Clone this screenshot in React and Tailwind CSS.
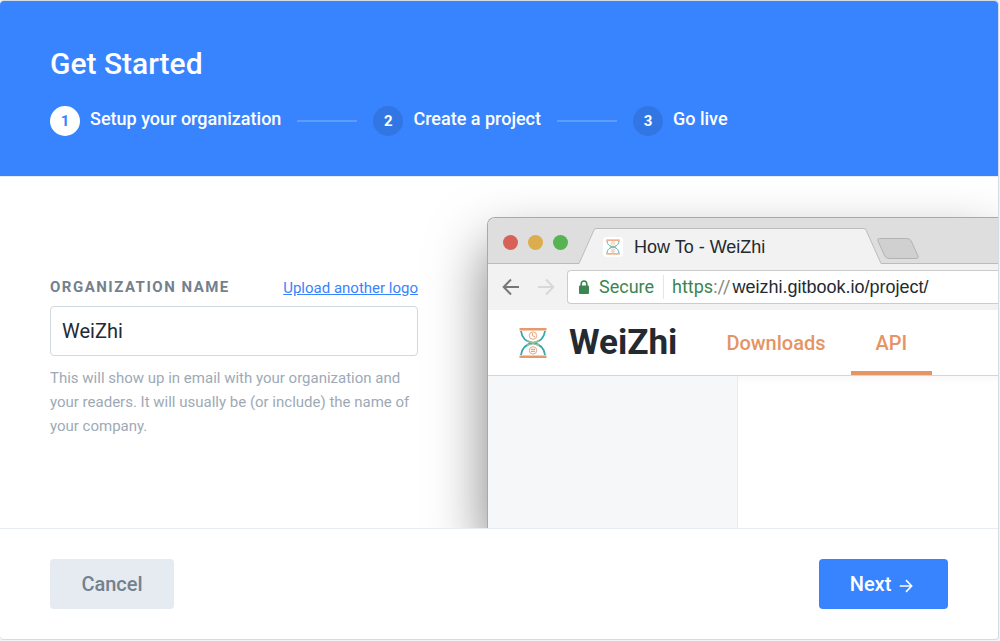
import React from "react";

const steps = ["Setup your organization", "Create a project", "Go live"];

function Hourglass({ className }) {
  return (
    <svg className={className} viewBox="0 0 30 32" fill="none" aria-hidden="true">
      <path d="M3 4C4 12 9 15 15 16C21 15 26 12 27 4" stroke="#36a7ae" strokeWidth="1.8" />
      <path d="M3 28C4 20 9 17 15 16C21 17 26 20 27 28" stroke="#36a7ae" strokeWidth="1.8" />
      <path d="M9 13.6Q12 15.3 15 16Q18 15.3 21 13.6M9 18.4Q12 16.7 15 16Q18 16.7 21 18.4" stroke="#8fbfa0" strokeWidth="1.8" />
      <path d="M1.5 2.2H28.5M1.5 29.8H28.5" stroke="#e8996b" strokeWidth="2.6" />
      <circle cx="15" cy="8.6" r="3.7" stroke="#e8a47c" strokeWidth="1" />
      <path d="M14.5 6.2V8.8L17 9.8" stroke="#e8a47c" strokeWidth="1" />
      <circle cx="15" cy="23.4" r="3.7" stroke="#e8a47c" strokeWidth="1" />
      <path d="M13 22.4H17M13 24.4H17" stroke="#e8a47c" strokeWidth="1.1" />
    </svg>
  );
}

function Arrow({ className, left }) {
  return (
    <svg className={className} viewBox="0 0 18 18" fill="none" stroke="currentColor" strokeWidth="2" aria-hidden="true">
      {left ? <path d="M17 9H2M9 1.5L1.7 9L9 16.5" /> : <path d="M1 9H16M9 1.5L16.3 9L9 16.5" />}
    </svg>
  );
}

function Header() {
  return (
    <header className="rounded-t bg-[#3884ff] px-[50px] pt-[43px] pb-10 text-white">
      <h1 className="text-[30px] leading-10 font-medium">Get Started</h1>
      <ol className="mt-[22px] flex items-center">
        {steps.map((step, i) => (
          <li key={step} className="flex items-center">
            {i > 0 && <span className="mx-4 h-0.5 w-[60px] bg-white/20" />}
            <span
              className={
                i === 0
                  ? "flex size-[30px] items-center justify-center rounded-full bg-white text-[15px] font-bold text-[#3884ff]"
                  : "flex size-[30px] items-center justify-center rounded-full bg-[#3276e4] text-[15px] font-bold"
              }
            >
              {i + 1}
            </span>
            <span className="ml-2.5 pb-1 text-[18px] leading-[26px] font-medium">{step}</span>
          </li>
        ))}
      </ol>
    </header>
  );
}

function OrganizationForm() {
  return (
    <div className="w-[368px] shrink-0 pt-[97px]">
      <div className="flex items-center justify-between">
        <label htmlFor="organization" className="text-[15px] leading-6 font-bold tracking-[1.5px] text-[#74818d] uppercase">
          Organization name
        </label>
        <a href="#logo" className="pt-0.5 text-[15px] leading-6 text-[#3884ff] underline">
          Upload another logo
        </a>
      </div>
      <input
        id="organization"
        type="text"
        defaultValue="WeiZhi"
        className="mt-1.5 block h-[50px] w-full rounded border border-[#d0d9e2] bg-white px-[11px] text-[20px] text-[#242a31] outline-none"
      />
      <p className="mt-2.5 text-[15px] leading-6 text-[#9daab6]">
        This will show up in email with your organization and your readers. It will usually be (or include) the name of your company.
      </p>
    </div>
  );
}

function TabStrip() {
  return (
    <div className="flex h-[46px] items-end rounded-tl-[7px] bg-[#dedede]">
      <div className="flex h-[46px] w-[91px] shrink-0 items-center gap-[10px] border-b border-[#bcbcbc] pt-[3px] pl-[15px]">
        <span className="size-[15px] rounded-full bg-[#d96057]" />
        <span className="size-[15px] rounded-full bg-[#dbad4c]" />
        <span className="size-[15px] rounded-full bg-[#58b353]" />
      </div>
      <svg className="h-[36px] w-[17px] shrink-0" viewBox="0 0 17 36" fill="none" aria-hidden="true">
        <path d="M0 35.5L15 2Q15.7 .5 17 .5V36H0Z" fill="#f2f2f2" />
        <path d="M0 35.5L15 2Q15.7 .5 17 .5" stroke="#bcbcbc" />
      </svg>
      <div className="flex h-[36px] w-[268px] shrink-0 items-center gap-[11px] border-t border-[#bcbcbc] bg-[#f2f2f2] pl-[7px]">
        <span className="flex size-5 items-center justify-center rounded bg-white">
          <Hourglass className="size-4" />
        </span>
        <span className="text-[18px] leading-6 text-[#242a31] [font-family:'Liberation_Sans',Arial,sans-serif]">How To - WeiZhi</span>
      </div>
      <svg className="h-[36px] w-[17px] shrink-0" viewBox="0 0 17 36" fill="none" aria-hidden="true">
        <path d="M17 35.5L2 2Q1.3 .5 0 .5V36H17Z" fill="#f2f2f2" />
        <path d="M17 35.5L2 2Q1.3 .5 0 .5" stroke="#bcbcbc" />
      </svg>
      <div className="flex h-[46px] min-w-0 flex-1 items-center border-b border-[#bcbcbc] pt-4">
        <svg className="-ml-1 h-[21px] w-[42px] shrink-0" viewBox="0 0 42 21" fill="#d0d0d0" stroke="#b3b3b3" aria-hidden="true">
          <path d="M2.5 .5H30Q33 .5 34.2 3L41 18Q42 20.5 39.5 20.5H12Q9 20.5 7.8 18L1 3Q0 .5 2.5 .5Z" />
        </svg>
      </div>
    </div>
  );
}

function AddressBar() {
  return (
    <div className="flex h-[46px] items-center bg-[#f2f2f2] pl-3.5">
      <Arrow left className="size-[18px] shrink-0 text-[#777774]" />
      <Arrow className="ml-[17px] size-[18px] shrink-0 text-[#d8d8d8]" />
      <div className="ml-3 flex h-[34px] min-w-0 flex-1 items-center rounded-l border border-r-0 border-[#cccccc] bg-white pl-2.5 text-[18px] leading-6">
        <svg className="h-[15px] w-3 shrink-0" viewBox="0 0 12 15" fill="none" aria-hidden="true">
          <rect x="1" y="5.5" width="10" height="8.5" rx="1" fill="#3b8550" />
          <path d="M3.2 7V4A2.8 3 0 0 1 8.8 4V7" stroke="#3b8550" strokeWidth="1.6" />
        </svg>
        <span className="ml-[9px] text-[#3b8550]">Secure</span>
        <span className="mr-2 ml-[9px] h-6 w-px bg-[#e6e6e6]" />
        <span className="text-[#3b8550]">
          https<span className="text-[#85857b]">://</span>
        </span>
        <span className="ml-0.5 text-[#242a31] [font-family:'Liberation_Sans',Arial,sans-serif]">weizhi.gitbook.io/project/</span>
      </div>
    </div>
  );
}

function BrowserPreview() {
  return (
    <section
      aria-label="Preview"
      className="mt-10 flex min-w-0 flex-1 flex-col rounded-tl-lg border-t border-l border-[#a9a9a9] bg-white shadow-[0_28px_56px_rgba(0,0,0,0.5)]"
    >
      <TabStrip />
      <AddressBar />
      <div className="flex h-[66px] shrink-0 items-center border-b border-[#d3d6dc] pl-[30px]">
        <Hourglass className="h-8 w-[30px] shrink-0" />
        <span className="ml-[21px] text-[35px] leading-10 font-bold text-[#242a31]">WeiZhi</span>
        <nav className="ml-6 flex self-stretch text-[20px] font-medium text-[#e59464]">
          <a href="#downloads" className="flex items-center px-[25px]">Downloads</a>
          <a href="#api" className="flex items-center border-b-4 border-[#e59464] px-[25px] pt-1">API</a>
        </nav>
      </div>
      <div className="flex flex-1">
        <div className="w-[250px] border-r border-[#e6ecf1] bg-[#f5f7f9]" />
        <div className="h-2 flex-1 bg-linear-to-b from-[#f9f9f9] to-white" />
      </div>
    </section>
  );
}

export default function App() {
  return (
    <div className="min-h-screen bg-[#f2f5f8] pr-px pb-px [font-family:Roboto,sans-serif]">
      <main className="rounded border-t border-r border-b border-[#d3dce4] bg-white">
        <Header />
        <div className="flex min-h-[352px] gap-[69px] overflow-hidden border-t border-[#e6ecf1] pl-[50px]">
          <OrganizationForm />
          <BrowserPreview />
        </div>
        <footer className="flex items-center justify-between border-t border-[#e6ecf1] px-[50px] py-[30px]">
          <button type="button" className="h-[50px] w-[124px] rounded bg-[#e6ebf2] text-[20px] font-medium text-[#74818d]">
            Cancel
          </button>
          <button type="button" className="flex h-[50px] w-[129px] items-center justify-center gap-2 rounded bg-[#3884ff] pr-1 text-[20px] font-medium text-white">
            Next
            <Arrow className="mt-1 size-3.5" />
          </button>
        </footer>
      </main>
    </div>
  );
}
